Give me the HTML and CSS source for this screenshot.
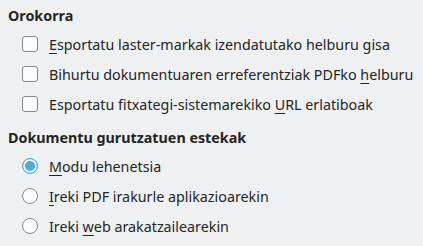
FILE: index.html
```html
<!DOCTYPE html>
<html lang="eu">
  <head>
    <meta charset="UTF-8" />
    <title>Estekak</title>
    <link rel="stylesheet" href="styles.css">
  </head>
  <body>
    <div class="group">
      <h2 class="group-title">Orokorra</h2>
      <label class="option"><span class="check"></span><span><u>E</u>sportatu laster-markak izendatutako helburu gisa</span></label>
      <label class="option"><span class="check"></span><span>Bihurtu dokumentuaren erreferentziak PDFko <u>h</u>elburu</span></label>
      <label class="option"><span class="check"></span><span>Esportatu fitxategi-sistemarekiko <u>U</u>RL erlatiboak</span></label>
    </div>
    <div class="group">
      <h2 class="group-title">Dokumentu gurutzatuen estekak</h2>
      <label class="option"><span class="radio checked"></span><span><u>M</u>odu lehenetsia</span></label>
      <label class="option"><span class="radio"></span><span><u>I</u>reki PDF irakurle aplikazioarekin</span></label>
      <label class="option"><span class="radio"></span><span>Ireki <u>w</u>eb arakatzailearekin</span></label>
    </div>
  </body>
</html>
```

FILE: styles.css
```css
body {
  margin: 0;
  padding: 3px 8px;
  background: #eff0f1;
  color: #232627;
  font-family: "Noto Sans", sans-serif;
  font-size: 14.3px;
  white-space: nowrap;
}

.group + .group {
  margin-top: 6px;
}

.group-title {
  font-size: 14.3px;
  font-weight: bold;
  margin: 0;
  height: 26px;
  line-height: 26px;
}

.option {
  display: flex;
  align-items: center;
  gap: 11px;
  height: 30px;
  padding-left: 14px;
}

.option u {
  text-decoration-thickness: 1px;
  text-underline-offset: 3px;
}

.check {
  flex: none;
  width: 14px;
  height: 14px;
  border: 1px solid #85888a;
  border-radius: 3px;
  background: #fcfcfc;
}

.radio {
  flex: none;
  width: 14px;
  height: 14px;
  border: 1px solid #85888a;
  border-radius: 50%;
  background: #fcfcfc;
}

.radio.checked {
  border-color: #3daee9;
  background: #3daee9;
  box-shadow: inset 0 0 0 2px #fcfcfc;
}
```
